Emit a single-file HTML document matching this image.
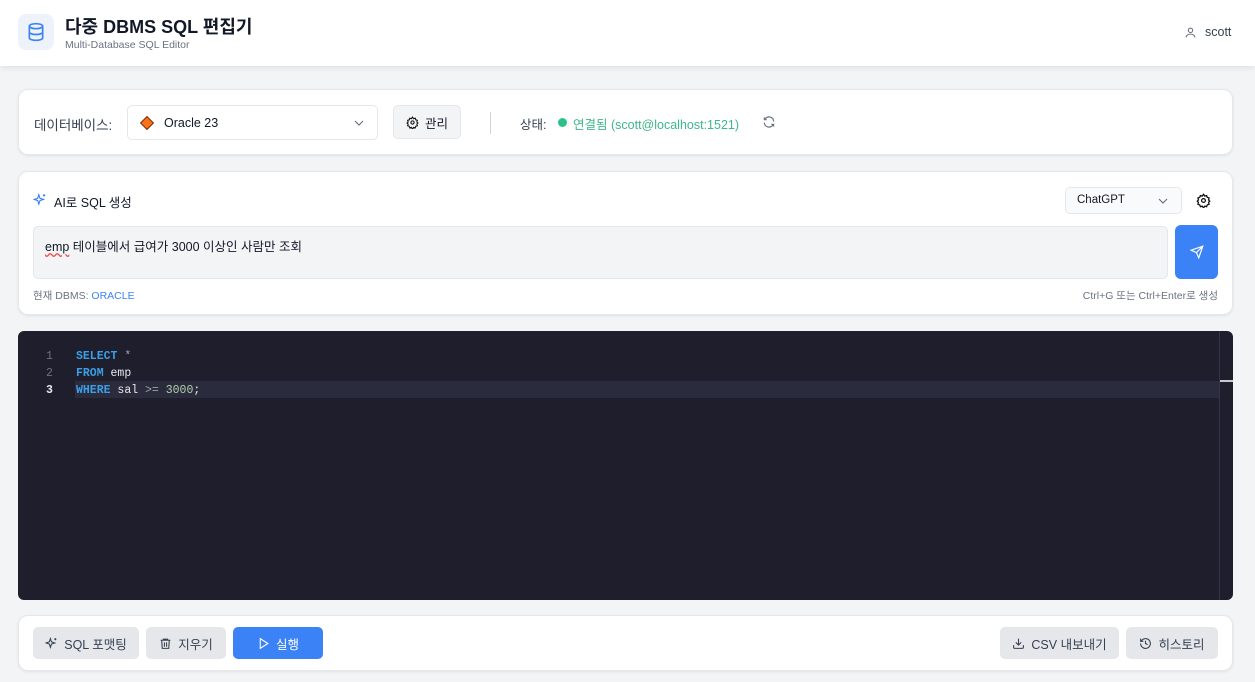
<!DOCTYPE html>
<html><head><meta charset="utf-8">
<style>
*{box-sizing:border-box;margin:0;padding:0}
body{width:1255px;height:682px;background:#f3f4f6;font-family:"Liberation Sans","Noto Sans CJK KR",sans-serif;position:relative;overflow:hidden;color:#111827}
.abs{position:absolute}
.card{position:absolute;left:18px;width:1215px;background:#fff;border:1px solid #e5e7eb;border-radius:10px;box-shadow:0 1px 3px rgba(0,0,0,.08)}
.btn{position:absolute;border-radius:5px;background:#e5e7eb;font-size:12.5px;display:flex;align-items:center;justify-content:center;gap:6px;color:#374151}
svg{display:block}
.code{font-family:"Liberation Mono","DejaVu Sans Mono",monospace;font-size:11.5px;position:absolute}
</style></head><body>
<div class="abs" style="left:0;top:0;width:1255px;height:66px;background:#fff;box-shadow:0 2px 6px rgba(0,0,0,.08)"></div>
<div class="abs" style="left:18px;top:14px;width:36px;height:36px;border-radius:8px;background:#eef2fb;display:flex;align-items:center;justify-content:center">
<svg width="20" height="20" viewBox="0 0 24 24" fill="none" stroke="#3b82f6" stroke-width="2"><ellipse cx="12" cy="5" rx="8" ry="3"/><path d="M4 5v14c0 1.7 3.6 3 8 3s8-1.3 8-3V5"/><path d="M4 12c0 1.7 3.6 3 8 3s8-1.3 8-3"/></svg></div>
<div class="abs" style="left:65px;top:13px;font-size:18px;font-weight:bold">다중 DBMS SQL 편집기</div>
<div class="abs" style="left:65px;top:39px;font-size:10.5px;color:#6b7280">Multi-Database SQL Editor</div>
<div class="abs" style="left:1184px;top:25px;display:flex;align-items:center;gap:8px;font-size:12.5px;color:#374151">
<svg width="13" height="13" viewBox="0 0 24 24" fill="none" stroke="#6b7280" stroke-width="2"><circle cx="12" cy="8" r="4"/><path d="M4 21c0-4 4-6 8-6s8 2 8 6"/></svg>scott</div>

<div class="card" style="top:89px;height:66px">
<div class="abs" style="left:15px;top:24px;font-size:13.5px;color:#374151">데이터베이스:</div>
<div class="abs" style="left:108px;top:15px;width:251px;height:35px;border:1px solid #e5e7eb;border-radius:5px">
<div class="abs" style="left:14px;top:12px;width:10px;height:10px;background:#f97316;border:1px solid #7c2d12;transform:rotate(45deg)"></div>
<div class="abs" style="left:36px;top:10px;font-size:12.5px">Oracle 23</div>
<svg class="abs" style="left:226px;top:12px" width="10" height="10" viewBox="0 0 10 10" fill="none" stroke="#6b7280" stroke-width="1.2"><path d="M1 3l4 4 4-4"/></svg></div>
<div class="btn" style="left:374px;top:15px;width:68px;height:34px;background:#f3f4f6;border:1px solid #e5e7eb;color:#111827">
<svg width="13" height="13" viewBox="0 0 24 24" fill="none" stroke="#111" stroke-width="2"><circle cx="12" cy="12" r="3"/><path d="M12 2l2 3 3-1 1 3 3 1-1 3 2 2-2 2 1 3-3 1-1 3-3-1-2 3-2-3-3 1-1-3-3-1 1-3-2-2 2-2-1-3 3-1 1-3 3 1z"/></svg>관리</div>
<div class="abs" style="left:471px;top:22px;width:1px;height:22px;background:#d1d5db"></div>
<div class="abs" style="left:501px;top:24px;font-size:12.5px;color:#374151">상태:</div>
<div class="abs" style="left:539px;top:28px;width:9px;height:9px;border-radius:50%;background:#2bc28a"></div>
<div class="abs" style="left:554px;top:24px;font-size:12.5px;color:#3db88a">연결됨 <span style="font-size:12.5px">(scott@localhost:1521)</span></div>
<svg class="abs" style="left:743px;top:25px" width="14" height="14" viewBox="0 0 24 24" fill="none" stroke="#6b7280" stroke-width="2"><path d="M20 11a8 8 0 0 0-14-5l-2 2M4 4v4h4M4 13a8 8 0 0 0 14 5l2-2M20 20v-4h-4"/></svg>
</div>

<div class="card" style="top:171px;height:144px">
<svg class="abs" style="left:14px;top:21px" width="14" height="14" viewBox="0 0 24 24" fill="none" stroke="#3b82f6" stroke-width="2"><path d="M10 3l2 6 6 2-6 2-2 6-2-6-6-2 6-2z"/><path d="M19 2v4M17 4h4"/></svg>
<div class="abs" style="left:35px;top:20px;font-size:12.5px">AI로 SQL 생성</div>
<div class="abs" style="left:1046px;top:15px;width:117px;height:27px;border:1px solid #e5e7eb;border-radius:5px;background:#f9fafb">
<div class="abs" style="left:11px;top:6px;font-size:11.5px">ChatGPT</div>
<svg class="abs" style="left:92px;top:8px" width="10" height="10" viewBox="0 0 10 10" fill="none" stroke="#6b7280" stroke-width="1.2"><path d="M1 3l4 4 4-4"/></svg></div>
<svg class="abs" style="left:1177px;top:21px" width="15" height="15" viewBox="0 0 24 24" fill="none" stroke="#111" stroke-width="2"><circle cx="12" cy="12" r="3"/><path d="M12 2l2 3 3-1 1 3 3 1-1 3 2 2-2 2 1 3-3 1-1 3-3-1-2 3-2-3-3 1-1-3-3-1 1-3-2-2 2-2-1-3 3-1 1-3 3 1z"/></svg>
<div class="abs" style="left:14px;top:54px;width:1135px;height:53px;background:#f3f4f6;border:1px solid #e5e7eb;border-radius:5px">
<div class="abs" style="left:11px;top:9px;font-size:12.5px"><span style="text-decoration:underline wavy #ef4444">emp</span> 테이블에서 급여가 3000 이상인 사람만 조회</div></div>
<div class="abs" style="left:1156px;top:53px;width:43px;height:54px;background:#3b82f6;border-radius:6px;display:flex;align-items:center;justify-content:center">
<svg width="14" height="14" viewBox="0 0 24 24" fill="none" stroke="#fff" stroke-width="2"><path d="M22 2L11 13M22 2l-7 20-4-9-9-4z"/></svg></div>
<div class="abs" style="left:14px;top:116px;font-size:10.5px;color:#6b7280">현재 DBMS: <span style="color:#3b82f6">ORACLE</span></div>
<div class="abs" style="right:14px;top:116px;font-size:10.5px;color:#6b7280">Ctrl+G 또는 Ctrl+Enter로 생성</div>
</div>

<div class="abs" style="left:18px;top:331px;width:1215px;height:269px;background:#1e1e2d;border-radius:6px;overflow:hidden">
<div class="abs" style="left:57px;top:50px;width:1144px;height:17px;background:#2a2b3c"></div>
<div class="abs" style="left:1201px;top:0;width:1px;height:269px;background:#333446"></div>
<div class="abs" style="left:1202px;top:49px;width:13px;height:2px;background:#c8c8d0"></div>
<div class="code" style="left:28px;top:17px;color:#6b7280;line-height:17px">1<br>2<br><span style="color:#e5e7eb;font-weight:bold">3</span></div>
<div class="code" style="left:58px;top:17px;color:#e5e7eb;line-height:17px"><span style="color:#3b9ee6;font-weight:bold">SELECT</span> <span style="color:#9ca3af">*</span><br><span style="color:#3b9ee6;font-weight:bold">FROM</span> emp<br><span style="color:#3b9ee6;font-weight:bold">WHERE</span> sal <span style="color:#9ca3af">&gt;=</span> <span style="color:#b5cea8">3000</span>;</div>
</div>

<div class="card" style="top:615px;height:56px">
<div class="btn" style="left:14px;top:11px;width:106px;height:32px"><svg width="13" height="13" viewBox="0 0 24 24" fill="none" stroke="#374151" stroke-width="2"><path d="M10 3l2 6 6 2-6 2-2 6-2-6-6-2 6-2z"/><path d="M19 2v4M17 4h4"/></svg>SQL 포맷팅</div>
<div class="btn" style="left:127px;top:11px;width:80px;height:32px"><svg width="13" height="13" viewBox="0 0 24 24" fill="none" stroke="#374151" stroke-width="2"><path d="M3 6h18M8 6V4h8v2M5 6l1 15h12l1-15M10 10v8M14 10v8"/></svg>지우기</div>
<div class="btn" style="left:214px;top:11px;width:90px;height:32px;background:#3b82f6;color:#fff"><svg width="13" height="13" viewBox="0 0 24 24" fill="none" stroke="#fff" stroke-width="2"><path d="M6 3l14 9-14 9z"/></svg>실행</div>
<div class="btn" style="left:981px;top:11px;width:119px;height:32px"><svg width="13" height="13" viewBox="0 0 24 24" fill="none" stroke="#374151" stroke-width="2"><path d="M21 15v4a2 2 0 0 1-2 2H5a2 2 0 0 1-2-2v-4M7 10l5 5 5-5M12 15V3"/></svg>CSV 내보내기</div>
<div class="btn" style="left:1107px;top:11px;width:92px;height:32px"><svg width="13" height="13" viewBox="0 0 24 24" fill="none" stroke="#374151" stroke-width="2"><path d="M3 12a9 9 0 1 0 3-6.7L3 8M3 3v5h5M12 7v5l4 2"/></svg>히스토리</div>
</div>
</body></html>
